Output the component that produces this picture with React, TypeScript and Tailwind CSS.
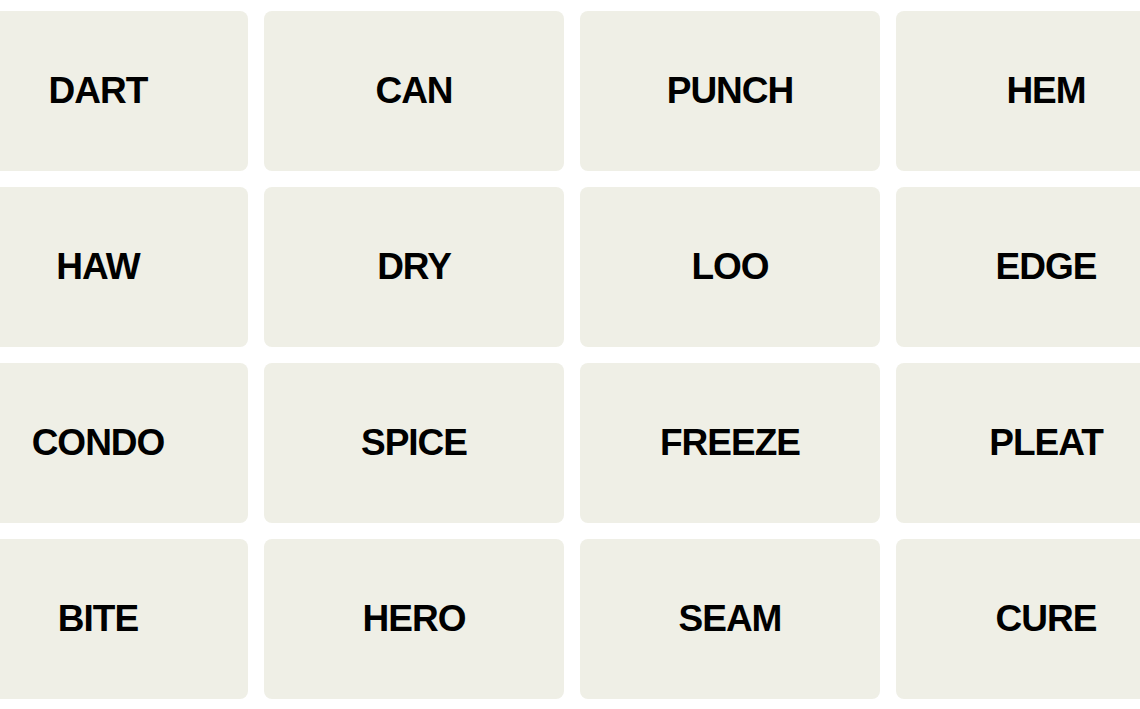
const words = [
  'DART', 'CAN', 'PUNCH', 'HEM',
  'HAW', 'DRY', 'LOO', 'EDGE',
  'CONDO', 'SPICE', 'FREEZE', 'PLEAT',
  'BITE', 'HERO', 'SEAM', 'CURE',
];

export default function App() {
  return (
    <div className="w-[1140px] h-[709px] overflow-hidden bg-white pt-[11px]">
      <div className="ml-[-52px] grid w-[1248px] grid-cols-[repeat(4,300px)] auto-rows-[160px] gap-4">
        {words.map(word => (
          <button
            key={word}
            className="flex items-center justify-center rounded-lg bg-[#efefe6] text-[37px] font-bold tracking-[-1px] text-black [font-family:'Liberation_Sans',Arial,sans-serif]"
          >
            {word}
          </button>
        ))}
      </div>
    </div>
  );
}
